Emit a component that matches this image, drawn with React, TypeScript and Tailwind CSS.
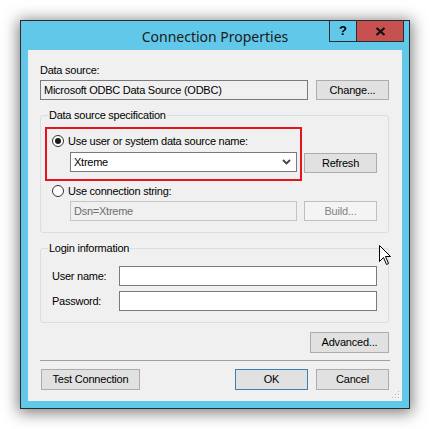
import React from "react";

const font = { fontFamily: '"Liberation Sans", Arial, sans-serif' };

function Btn({
  children,
  w,
  h = "h-[20px]",
  extra = "",
  disabled = false,
  isDefault = false,
}: {
  children: React.ReactNode;
  w: string;
  h?: string;
  extra?: string;
  disabled?: boolean;
  isDefault?: boolean;
}) {
  return (
    <div
      className={`${w} ${h} ${extra} flex items-center justify-center border text-[11px] tracking-[-0.2px] ${
        disabled
          ? "border-[#bfbfbf] bg-[#f4f4f4] text-[#838383]"
          : isDefault
          ? "border-[#3c7fb1] bg-[#e1e1e1] text-black"
          : "border-[#adadad] bg-[#e1e1e1] text-black"
      }`}
    >
      {children}
    </div>
  );
}

function Radio({ checked }: { checked?: boolean }) {
  return (
    <div className="w-[12px] h-[12px] rounded-full border border-[#333333] bg-white flex items-center justify-center shrink-0">
      {checked && <div className="w-[6px] h-[6px] rounded-full bg-[#1a1a1a]" />}
    </div>
  );
}

export default function App() {
  return (
    <div
      className="relative w-[430px] h-[429px] bg-white overflow-hidden pl-[20px] pt-[20px]"
      style={font}
    >
      <div className="w-[390px] h-[389px] border border-[#2b2b2b] bg-[#62c8e9] flex flex-col shadow-[0_2px_14px_2px_rgba(0,0,0,0.5)]">
        {/* Title bar */}
        <div className="relative h-[29px] flex items-center justify-center">
          <span
            className="text-[14px] text-[#1a1a1a] pt-[1px]"
            style={{ fontFamily: '"Noto Sans", "Open Sans", sans-serif' }}
          >
            Connection Properties
          </span>
          <div className="absolute -top-px right-[5px] flex h-[22px] border border-[#2b2b2b]">
            <div className="w-[27px] h-full border-r border-[#2b2b2b] flex items-center justify-center text-[13px] font-bold text-black">
              ?
            </div>
            <div className="w-[46px] h-full bg-[#c75050] flex items-center justify-center">
              <svg width="11" height="9" viewBox="0 0 11 9">
                <path d="M1.5 1 L9.5 8 M9.5 1 L1.5 8" stroke="#111" strokeWidth="2.2" />
              </svg>
            </div>
          </div>
        </div>

        {/* Client area */}
        <div className="relative mx-[7px] h-[351px] bg-[#f0f0f0] px-[12px] pt-[14px] flex flex-col text-[11px] tracking-[-0.25px] text-black">
          <div className="h-[13px] leading-[13px]">Data source:</div>
          <div className="mt-[3px] flex">
            <div className="w-[268px] h-[20px] border border-[#7a7a7a] bg-[#f0f0f0] flex items-center pl-[3px]">
              Microsoft ODBC Data Source (ODBC)
            </div>
            <Btn w="w-[73px]" extra="ml-[8px]">
              Change...
            </Btn>
          </div>

          {/* Data source specification */}
          <div className="relative mt-[15px] w-[349px] h-[118px] border border-[#d5dfe5] rounded-[3px] pl-[4px] pt-[11px] flex flex-col">
            <span className="absolute -top-[7px] left-[7px] px-[1px] bg-[#f0f0f0] leading-[13px]">
              Data source specification
            </span>
            <div className="flex items-end">
              <div className="w-[257px] h-[54px] border-2 border-[#e8141b] pl-[5px] pt-[5px] flex flex-col">
                <div className="h-[14px] flex items-center gap-[4px]">
                  <Radio checked />
                  <span>Use user or system data source name:</span>
                </div>
                <div className="mt-[4px] ml-[18px] w-[227px] h-[20px] border border-[#7a7a7a] bg-white flex items-center justify-between pl-[3px] pr-[5px]">
                  <span>Xtreme</span>
                  <svg width="9" height="6" viewBox="0 0 9 6">
                    <path d="M1 1 L4.5 4.5 L8 1" stroke="#444" strokeWidth="1.8" fill="none" />
                  </svg>
                </div>
              </div>
              <Btn w="w-[73px]" extra="ml-[2px] mb-[8px]">
                Refresh
              </Btn>
            </div>
            <div className="mt-[3px] pl-[7px] h-[14px] flex items-center gap-[4px]">
              <Radio />
              <span>Use connection string:</span>
            </div>
            <div className="mt-[3px] ml-[25px] flex">
              <div className="w-[227px] h-[20px] border border-[#c4c4c4] bg-[#f0f0f0] flex items-center pl-[3px] text-[#6d6d6d]">
                Dsn=Xtreme
              </div>
              <Btn w="w-[73px]" extra="ml-[7px]" disabled>
                Build...
              </Btn>
            </div>
          </div>

          {/* Login information */}
          <div className="relative mt-[15px] w-[349px] h-[75px] border border-[#d5dfe5] rounded-[3px] pl-[11px] pt-[17px] flex flex-col gap-[5px]">
            <span className="absolute -top-[7px] left-[7px] px-[1px] bg-[#f0f0f0] leading-[13px]">
              Login information
            </span>
            <div className="flex items-center">
              <span className="w-[67px]">User name:</span>
              <div className="w-[258px] h-[20px] border border-[#7a7a7a] bg-white" />
            </div>
            <div className="flex items-center">
              <span className="w-[67px]">Password:</span>
              <div className="w-[258px] h-[20px] border border-[#7a7a7a] bg-white" />
            </div>
          </div>

          <div className="mt-[9px] flex justify-end pr-[1px]">
            <Btn w="w-[79px]" h="h-[21px]">
              Advanced...
            </Btn>
          </div>

          <div className="mt-[7px] h-px w-[350px] bg-[#a0a0a0]" />

          <div className="mt-[8px] flex">
            <Btn w="w-[99px]" h="h-[21px]" extra="ml-[1px]">
              Test Connection
            </Btn>
            <Btn w="w-[73px]" h="h-[21px]" extra="ml-[95px]" isDefault>
              OK
            </Btn>
            <Btn w="w-[73px]" h="h-[21px]" extra="ml-[8px]">
              Cancel
            </Btn>
          </div>

          {/* size grip */}
          <svg className="absolute right-[2px] bottom-[2px]" width="10" height="10" viewBox="0 0 10 10">
            {[
              [8, 2],
              [5, 5],
              [8, 5],
              [2, 8],
              [5, 8],
              [8, 8],
            ].map(([x, y], i) => (
              <g key={i}>
                <rect x={x} y={y} width="1" height="1" fill="#b8b8b8" />
                <rect x={x + 1} y={y + 1} width="1" height="1" fill="#ffffff" />
              </g>
            ))}
          </svg>
        </div>
      </div>

      {/* mouse cursor */}
      <svg className="absolute left-[379px] top-[245px]" width="13" height="21" viewBox="0 0 13 21">
        <path
          d="M0.5 0.5 L0.5 16.5 L4.5 12.5 L7.5 19.5 L9.5 18.5 L6.5 11.5 L11.5 11.5 Z"
          fill="#fff"
          stroke="#000"
          strokeWidth="1"
        />
      </svg>
    </div>
  );
}
